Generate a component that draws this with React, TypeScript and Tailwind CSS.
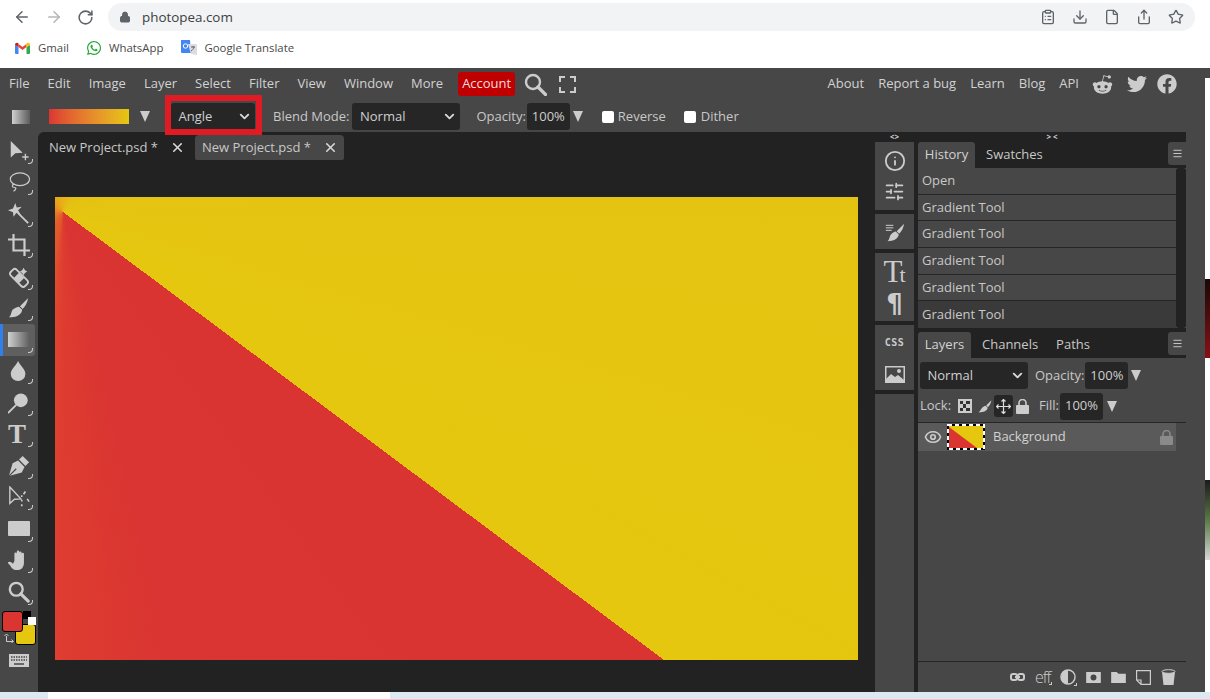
import { ArrowLeft, ArrowRight, RotateCw, Lock, ClipboardList, Download, File, Share, Star, ChevronDown, X, Menu, Eye, Info, SlidersHorizontal } from 'lucide-react';
import { FaRedditAlien, FaTwitter, FaFacebook, FaWhatsapp } from 'react-icons/fa';

const menuLeft = ['File', 'Edit', 'Image', 'Layer', 'Select', 'Filter', 'View', 'Window', 'More'];
const menuRight = ['About', 'Report a bug', 'Learn', 'Blog', 'API'];
const historyRows = ['Open', 'Gradient Tool', 'Gradient Tool', 'Gradient Tool', 'Gradient Tool', 'Gradient Tool'];

function Svg({ children, size = 22 }: { children: React.ReactNode; size?: number }) {
  return (
    <svg width={size} height={size} viewBox="0 0 24 24" fill="#cccccc">
      {children}
    </svg>
  );
}

const tools: React.ReactNode[] = [
  <Svg key="move"><path d="M3 1v18l5-4.500 8-.5z" /><path d="M19 15v7M15.500 18.500h7" stroke="#ccc" strokeWidth="1.500" /></Svg>,
  <Svg key="lasso"><ellipse cx="13" cy="9" rx="10.500" ry="7" fill="none" stroke="#ccc" strokeWidth="1.300" /><path d="M7 14c-3 1-3 4 0 4s1 3-1 4" fill="none" stroke="#ccc" strokeWidth="1.300" /></Svg>,
  <Svg key="wand"><path d="M8 0l1.500 5L15 4l-4 4 3 5-5-2-3 4-.5-5L0 8l5.500-2z" /><path d="M11 11l11 11" stroke="#ccc" strokeWidth="2" /></Svg>,
  <Svg key="crop"><path d="M6 0v18h18M0 6h18v18" fill="none" stroke="#ccc" strokeWidth="2.400" /></Svg>,
  <Svg key="heal"><g transform="rotate(45 12 13)"><rect x="1" y="8.500" width="22" height="9" rx="3" fill="none" stroke="#ccc" strokeWidth="2" /><rect x="8" y="9" width="8" height="8" fill="#ccc" /></g><path d="M17 2l1.500 2.500L21 6l-2.500 1.500L17 10l-1.500-2.500L13 6l2.500-1.500z" /></Svg>,
  <Svg key="brush"><path d="M22 1l-9 9 3 3c3-3 5-7 6-12z" /><path d="M12 10.500l3.500 3.500C15 19 9 23 1 22c3-2 2-7 5-9 2-1.500 4-2 6-2.500z" /></Svg>,
  <svg key="gradient" width="22" height="18" viewBox="0 0 22 18"><defs><linearGradient id="toolgrad"><stop offset="0" stopColor="#d0d0d0" /><stop offset="1" stopColor="#5c5c5c" /></linearGradient></defs><rect width="22" height="15" y="1" fill="url(#toolgrad)" /></svg>,
  <Svg key="drop"><path d="M11 1c3 6 8 9 8 14a8 8 0 0 1-16 0c0-5 5-8 8-14z" /></Svg>,
  <Svg key="dodge"><circle cx="14" cy="9" r="7.500" /><path d="M9 14L0 23" stroke="#ccc" strokeWidth="2" /></Svg>,
  <span key="type" className="font-['Liberation_Serif',serif] text-[27px] leading-none font-bold text-[#cccccc]">T</span>,
  <Svg key="pen"><path d="M16 1l7 7-4 4-7-7z" /><path d="M11 6l7 7-3 6L1 23l4-14z" /><path d="M1 23l8-8" stroke="#474747" strokeWidth="1.200" /></Svg>,
  <Svg key="pathsel"><path d="M2 1v18l5-4.500 7-.5z" fill="none" stroke="#ccc" strokeWidth="1.500" /><path d="M15 10v2M15 15v2M15 20v2M19 6l-2 3M21 14l2 3" stroke="#ccc" strokeWidth="1.800" /></Svg>,
  <svg key="rect" width="22" height="15" viewBox="0 0 22 15"><rect width="22" height="15" rx="1" fill="#cccccc" /></svg>,
  <Svg key="hand"><path d="M7 13V5a1.300 1.300 0 0 1 2.600 0V3a1.300 1.300 0 0 1 2.600 0v1a1.300 1.300 0 0 1 2.600 0v1.500a1.300 1.300 0 0 1 2.600 0V15c0 5-3 8-7 8-4 0-6-1-8-5l-3-3c2-2 4-1 6 1z" /></Svg>,
  <Svg key="zoom"><circle cx="9" cy="9" r="7" fill="none" stroke="#ccc" strokeWidth="2.600" /><path d="M14 14l8 8" stroke="#ccc" strokeWidth="3.400" strokeLinecap="round" /></Svg>,
];

function Triangle() {
  return <span className="block w-0 h-0 border-x-[5px] border-x-transparent border-t-[11px] border-t-[#cccccc]" />;
}

function Tick() {
  return <span className="absolute right-[2px] bottom-[3px] w-[5px] h-[5px] border-r border-b border-[#cccccc] rounded-br-[4px]" />;
}

function ToolCell({ children, active }: { children: React.ReactNode; active?: boolean }) {
  return (
    <div className={`relative h-[31.5px] w-[35px] flex items-center pl-[8px] rounded-r-[3px] ${active ? 'bg-[#5f5f5f] border-l-[3px] border-l-[#2f80ed] !pl-[5px]' : ''}`}>
      {children}
      <Tick />
    </div>
  );
}

function DarkSelect({ label, className }: { label: string; className: string }) {
  return (
    <div className={`h-[27px] rounded-[3px] bg-[#262626] flex items-center justify-between pl-[7.500px] pr-[3px] text-[#cfcfcf] ${className}`}>
      <span>{label}</span>
      <ChevronDown size={15} strokeWidth={3} color="#d8d8d8" />
    </div>
  );
}

function PercentBox({ className }: { className: string }) {
  return (
    <span className={`w-[43px] h-[27px] rounded-[3px] bg-[#262626] flex items-center justify-center text-[#cfcfcf] ${className}`}>100%</span>
  );
}

function PanelMenuButton() {
  return (
    <div className="ml-auto w-[18px] h-[23px] rounded-l-[3px] bg-[#474747] flex items-center justify-center">
      <Menu size={11} color="#d0d0d0" />
    </div>
  );
}

function IconGroup({ children, className }: { children: React.ReactNode; className: string }) {
  return <div className={`w-[39px] bg-[#474747] flex flex-col items-center shrink-0 ${className}`}>{children}</div>;
}

export default function App() {
  return (
    <div className="relative w-[1210px] h-[699px] overflow-hidden bg-white flex flex-col font-['Open_Sans',sans-serif]">
      {/* browser chrome */}
      <div className="h-[34px] flex items-center pl-[13px] pr-[15px] shrink-0">
        <ArrowLeft size={18} color="#5f6368" strokeWidth={2} />
        <ArrowRight size={18} color="#b4b6b9" strokeWidth={2} className="ml-[14px]" />
        <RotateCw size={17} color="#5f6368" strokeWidth={2.200} className="ml-[14px]" />
        <div className="ml-[14px] h-[28px] flex-1 rounded-full bg-[#f1f3f4] flex items-center pl-[11px] pr-[11px]">
          <Lock size={12} color="#5f6368" fill="#5f6368" />
          <span className="ml-[11px] text-[13.400px] text-[#3c4043]">photopea.com</span>
          <div className="ml-auto flex items-center gap-[16px] text-[#5f6368]">
            <ClipboardList size={16} />
            <Download size={16} />
            <File size={16} />
            <Share size={16} />
            <Star size={16} />
          </div>
        </div>
      </div>
      <div className="h-[34px] pb-[6px] flex items-center pl-[15px] text-[11.400px] text-[#4a4a4a] shrink-0">
        <svg width="15" height="12" viewBox="0 0 15 12" className="mr-[8px]">
          <path d="M0 3v8a1 1 0 0 0 1 1h2.500V5z" fill="#4285f4" />
          <path d="M15 3v8a1 1 0 0 1-1 1h-2.500V5z" fill="#34a853" />
          <path d="M3.500 5v-3L7.500 5l4-3v3l-4 3z" fill="#ea4335" />
          <path d="M0 3c0-2 2-3 3.500-1.500V5z" fill="#c5221f" />
          <path d="M15 3c0-2-2-3-3.500-1.500V5z" fill="#fbbc04" />
        </svg>
        <span>Gmail</span>
        <FaWhatsapp size={16} color="#25a83b" className="ml-[17px] mr-[7px]" />
        <span>WhatsApp</span>
        <svg width="16" height="16" viewBox="0 0 16 16" className="ml-[18px] mr-[7px]">
          <path d="M0 0h9l1 13H1a1 1 0 0 1-1-1z" fill="#4285f4" />
          <path d="M7 4h8a1 1 0 0 1 1 1v10l-6-1z" fill="#dadce0" />
          <circle cx="4.500" cy="6" r="2.200" fill="none" stroke="#fff" strokeWidth="1" />
          <path d="M10 7h4M12 6v1M13 7c-.5 2-1.500 3-3 4" fill="none" stroke="#5f6368" strokeWidth="1" />
        </svg>
        <span>Google Translate</span>
      </div>

      <div className="h-[624px] flex shrink-0">
        <div className="w-[1205px] bg-[#474747] flex flex-col">
          {/* menu bar */}
          <div className="h-[32px] flex items-center pl-[9px] pr-[28px] text-[13px] text-[#d2d2d2] shrink-0">
            <div className="flex gap-[18px]">
              {menuLeft.map((m) => (
                <span key={m}>{m}</span>
              ))}
            </div>
            <span className="ml-[15px] h-[24px] px-[4px] rounded-[3px] bg-[#c00000] text-[#f4dede] flex items-center">Account</span>
            <svg width="23" height="23" viewBox="0 0 23 23" className="ml-[9px]" fill="none" stroke="#cccccc">
              <circle cx="9" cy="9" r="7" strokeWidth="2.400" />
              <path d="M14 14l7.500 7.500" strokeWidth="3.200" strokeLinecap="round" />
            </svg>
            <svg width="17" height="17" viewBox="0 0 17 17" className="ml-[12px]" fill="none" stroke="#cccccc" strokeWidth="2">
              <path d="M1 6V1h5M11 1h5v5M16 11v5h-5M6 16H1v-5" />
            </svg>
            <div className="ml-auto flex items-center gap-[14px]">
              {menuRight.map((m) => (
                <span key={m}>{m}</span>
              ))}
              <FaRedditAlien size={21} color="#cccccc" className="-ml-[1px]" />
              <FaTwitter size={20} color="#cccccc" />
              <FaFacebook size={20} color="#cccccc" className="-ml-[4px]" />
            </div>
          </div>

          {/* options bar */}
          <div className="h-[32px] pt-[1px] flex items-center pl-[12px] text-[13px] text-[#c8c8c8] shrink-0">
            <div className="w-[18px] h-[14px] bg-gradient-to-r from-[#d0d0d0] to-[#5c5c5c]" />
            <div className="ml-[19px] w-[80px] h-[15px] bg-gradient-to-r from-[#db3532] to-[#e5c70f]" />
            <div className="ml-[11px]"><Triangle /></div>
            <div className="relative ml-[21px]">
              <DarkSelect label="Angle" className="w-[84px]" />
              <div className="absolute -left-[6px] -right-[7px] -top-[8px] -bottom-[5px] border-[6px] border-[#e01b24]" />
            </div>
            <span className="ml-[18px]">Blend Mode:</span>
            <DarkSelect label="Normal" className="ml-[3px] w-[108px]" />
            <span className="ml-[16px]">Opacity:</span>
            <PercentBox className="ml-[1px]" />
            <div className="ml-[3px]"><Triangle /></div>
            <span className="ml-[19px] w-[12px] h-[12px] rounded-[2px] bg-white" />
            <span className="ml-[4px]">Reverse</span>
            <span className="ml-[18px] w-[12px] h-[12px] rounded-[2px] bg-white" />
            <span className="ml-[5px]">Dither</span>
          </div>

          {/* body */}
          <div className="flex-1 flex min-h-0">
            <div className="w-[38px] pt-[3px] flex flex-col shrink-0">
              {tools.map((t, i) => (
                <ToolCell key={i} active={i === 6}>{t}</ToolCell>
              ))}
              <div className="relative h-[42px]">
                <span className="absolute left-[15px] top-[16px] w-[21px] h-[21px] rounded-[3px] bg-[#e5c70f] border border-black" />
                <span className="absolute left-[2px] top-[3px] w-[21px] h-[21px] rounded-[3px] bg-[#db3532] border border-black" />
                <span className="absolute left-[23px] top-[3px] w-[8px] h-[8px] bg-black" />
                <span className="absolute left-[28px] top-[9px] w-[8px] h-[8px] bg-white" />
                <svg width="11" height="10" viewBox="0 0 11 10" fill="none" stroke="#cccccc" className="absolute left-[4px] top-[25px]">
                  <path d="M2.500 3v5.500H9M.5 3l2-2 2 2M7.500 6.500l2 2-2 1" />
                </svg>
              </div>
              <div className="mt-[4px] pl-[9px]">
                <svg width="20" height="13" viewBox="0 0 20 13">
                  <rect width="20" height="13" fill="#cccccc" />
                  <path d="M2 3h16M2 6h16" stroke="#474747" strokeWidth="1.500" strokeDasharray="1.500 1" />
                  <path d="M5 10h10" stroke="#474747" strokeWidth="1.500" />
                </svg>
              </div>
            </div>

            {/* workspace */}
            <div className="w-[1148px] bg-[#222222] rounded-tl-[6px] flex min-w-0">
              <div className="w-[837px] flex flex-col shrink-0">
                <div className="h-[25px] mt-[3px] flex items-stretch text-[13px] text-[#c8c8c8] shrink-0">
                  <div className="w-[157px] pl-[11px] flex items-center justify-between pr-[10px]">
                    <span>New Project.psd *</span>
                    <X size={15} strokeWidth={2.500} color="#d8d8d8" />
                  </div>
                  <div className="w-[149px] pl-[7px] pr-[6px] rounded-t-[4px] rounded-b-[2px] bg-[#474747] flex items-center justify-between">
                    <span>New Project.psd *</span>
                    <X size={15} strokeWidth={2.500} color="#d8d8d8" />
                  </div>
                </div>
                <div className="ml-[17px] mt-[37px] w-[803px] h-[463px] bg-[conic-gradient(from_126.7deg_at_8px_15px,#d93432_0%,#da3532_11%,#de3c30_14.800%,#e2552c_17.500%,#e77f24_40%,#e8961c_50%,#e8ae18_62%,#e5c014_75%,#e5c70f_100%)]" />
              </div>

              <div className="w-[39px] flex flex-col shrink-0">
                <div className="h-[10px] flex items-center justify-center text-[8px] leading-none font-bold text-[#cccccc]">&lt;&gt;</div>
                <IconGroup className="h-[68px] justify-around py-[3px]">
                  <Info size={22} color="#cccccc" />
                  <SlidersHorizontal size={21} color="#cccccc" />
                </IconGroup>
                <IconGroup className="h-[35px] justify-center mt-[4px]">
                  <Svg size={20}>
                    <path d="M23 2l-9 9 3 3c3-3 5-7 6-12z" />
                    <path d="M13 11.500l3.500 3.500C16 20 10 23 3 23c3-2 2-7 5-9 2-1.500 3-2 5-2.500z" />
                    <path d="M1 4h9M1 7h9M1 10h7" stroke="#ccc" strokeWidth="1.200" />
                  </Svg>
                </IconGroup>
                <IconGroup className="h-[68px] pt-[3px] mt-[4px] text-[#cccccc] font-['Liberation_Serif',serif]">
                  <span className="h-[32px] -ml-[3px] leading-[32px] text-[31px] tracking-[-3px]">T<span className="text-[22px]">t</span></span>
                  <span className="h-[32px] leading-[32px] text-[26px] font-bold font-['DejaVu_Sans',sans-serif]">¶</span>
                </IconGroup>
                <IconGroup className="h-[65px] justify-between pt-[13px] pb-[7px] mt-[4px] text-[#cccccc]">
                  <span className="text-[10px] leading-none font-bold tracking-[0.500px] font-['DejaVu_Sans_Mono',monospace]">CSS</span>
                  <svg width="20" height="17" viewBox="0 0 20 17">
                    <rect width="20" height="17" fill="#cccccc" />
                    <rect x="1.500" y="1.500" width="17" height="14" fill="#474747" />
                    <circle cx="14" cy="5" r="2" fill="#cccccc" />
                    <path d="M1 16v-3l5-5 4 3 3-2 6 5v2z" fill="#cccccc" />
                  </svg>
                </IconGroup>
                <IconGroup className="flex-1 mt-[4px]">{null}</IconGroup>
              </div>

              {/* panels */}
              <div className="ml-[4px] w-[268px] flex flex-col text-[13px] text-[#c8c8c8] shrink-0">
                <div className="h-[10px] flex items-center justify-center text-[8px] leading-none font-bold text-[#cccccc]">&gt; &lt;</div>
                <div className="h-[26px] flex shrink-0">
                  <div className="w-[57px] pb-[1px] rounded-t-[3px] bg-[#474747] flex items-center justify-center text-[#d2d2d2]">History</div>
                  <div className="ml-[11px] pb-[1px] flex items-center">Swatches</div>
                  <PanelMenuButton />
                </div>
                <div className="h-[160px] flex shrink-0">
                  <div className="w-[258px] flex flex-col">
                    {historyRows.map((row, i) => (
                      <div key={i} className={`h-[26.670px] pl-[4px] flex items-center border-b border-[#262626] ${i === 5 ? 'bg-[#3a3a3a] border-b-0' : 'bg-[#474747]'}`}>
                        {row}
                      </div>
                    ))}
                  </div>
                  <div className="w-[10px] bg-[#474747] flex">
                    <div className="w-[10px] h-full bg-[#222222] rounded-[3px]" />
                  </div>
                </div>
                <div className="h-[4px] shrink-0" />
                <div className="h-[26px] flex shrink-0">
                  <div className="w-[53px] pb-[1px] rounded-t-[3px] bg-[#474747] flex items-center justify-center text-[#d2d2d2]">Layers</div>
                  <div className="ml-[11px] pb-[1px] flex items-center">Channels</div>
                  <div className="ml-[18px] pb-[1px] flex items-center">Paths</div>
                  <PanelMenuButton />
                </div>
                <div className="flex-1 bg-[#474747] flex flex-col min-h-0">
                  <div className="h-[34px] pt-[4px] pl-[2px] flex items-start">
                    <DarkSelect label="Normal" className="w-[108px]" />
                    <span className="ml-[7px] h-[27px] flex items-center">Opacity:</span>
                    <PercentBox className="ml-[1px]" />
                    <div className="ml-[3px] h-[27px] flex items-center"><Triangle /></div>
                  </div>
                  <div className="h-[31px] pb-[2px] pl-[2px] flex items-center border-b border-[#262626]">
                    <span className="w-[31px]">Lock:</span>
                    <svg width="14" height="14" viewBox="0 0 14 14" className="ml-[7px]">
                      <rect width="14" height="14" fill="#cccccc" />
                      <path d="M2 2h3v3H2zM8 2h4v3H8zM5 5h3v4H5zM2 9h3v3H2zM8 9h4v3H8z" fill="#333" />
                    </svg>
                    <span className="ml-[6px]">
                      <Svg size={14}>
                        <path d="M23 2l-9 9 3 3c3-3 5-7 6-12z" />
                        <path d="M13 11.500l3.500 3.500C16 20 10 23 1 23c3-2 4-7 7-9 2-1.500 3-2 5-2.500z" />
                      </Svg>
                    </span>
                    <span className="ml-[2px] w-[19px] h-[22px] rounded-[3px] bg-[#262626] flex items-center justify-center">
                      <svg width="15" height="15" viewBox="0 0 15 15" fill="none" stroke="#dddddd" strokeWidth="1.200">
                        <path d="M7.500 0v15M0 7.500h15M5.500 2.500l2-2 2 2M5.500 12.500l2 2 2-2M2.500 5.500l-2 2 2 2M12.500 5.500l2 2-2 2" />
                      </svg>
                    </span>
                    <svg width="13" height="15" viewBox="0 0 13 15" className="ml-[3px]">
                      <rect y="6" width="13" height="9" rx="1" fill="#cccccc" />
                      <path d="M3 6V4a3.500 3.500 0 0 1 7 0v2" fill="none" stroke="#cccccc" strokeWidth="1.600" />
                    </svg>
                    <span className="ml-[10px] w-[19px]">Fill:</span>
                    <PercentBox className="ml-[2px]" />
                    <div className="ml-[4px]"><Triangle /></div>
                  </div>
                  <div className="h-[28px] w-[258px] bg-[#5a5a5a] flex items-center shrink-0">
                    <Eye size={18} color="#cccccc" strokeWidth={2.200} className="ml-[6px]" />
                    <svg width="38" height="26" viewBox="0 0 38 26" className="ml-[5px]">
                      <rect x="2" y="2" width="34" height="22" fill="#e5c70f" />
                      <path d="M2 3l28 21H2z" fill="#db3532" />
                      <rect x="1" y="1" width="36" height="24" fill="none" stroke="#000000" strokeWidth="2" />
                      <rect x="1" y="1" width="36" height="24" fill="none" stroke="#ffffff" strokeWidth="2" strokeDasharray="4 3" />
                    </svg>
                    <span className="ml-[8px] text-[#d2d2d2]">Background</span>
                    <svg width="13" height="15" viewBox="0 0 13 15" className="ml-auto mr-[3px]">
                      <rect y="6" width="13" height="9" rx="1" fill="#8a8a8a" />
                      <path d="M3 6V4a3.500 3.500 0 0 1 7 0v2" fill="none" stroke="#8a8a8a" strokeWidth="1.600" />
                    </svg>
                  </div>
                  <div className="flex-1" />
                  <div className="h-[31px] border-t border-[#262626] flex items-center justify-end gap-[10px] pr-[10px] shrink-0">
                    <svg width="15" height="8" viewBox="0 0 15 8" fill="none" stroke="#cccccc" strokeWidth="2">
                      <rect x="1" y="1" width="6" height="6" rx="2" />
                      <rect x="8" y="1" width="6" height="6" rx="2" />
                      <path d="M5 4h5" />
                    </svg>
                    <span className="relative w-[15px] text-[16px] leading-none font-light text-[#cccccc] tracking-[-1px]">
                      eff
                      <span className="absolute -right-[2px] bottom-0 w-[3px] h-[3px] border-r border-b border-[#cccccc]" />
                    </span>
                    <span className="relative">
                      <svg width="16" height="16" viewBox="0 0 17 17" className="block">
                        <circle cx="8.500" cy="8.500" r="7.500" fill="none" stroke="#cccccc" strokeWidth="1.500" />
                        <path d="M8.500 1a7.500 7.500 0 0 0 0 15z" fill="#cccccc" />
                      </svg>
                      <span className="absolute -right-[1px] -bottom-[1px] w-[3px] h-[3px] border-r border-b border-[#cccccc]" />
                    </span>
                    <svg width="15" height="11" viewBox="0 0 16 12">
                      <rect width="16" height="12" fill="#cccccc" />
                      <circle cx="8" cy="6" r="3.200" fill="#474747" />
                    </svg>
                    <svg width="15" height="11" viewBox="0 0 16 12"><path d="M0 0h6l2 2h8v10H0z" fill="#cccccc" /></svg>
                    <svg width="15" height="15" viewBox="0 0 15 15" fill="none" stroke="#cccccc" strokeWidth="1.200">
                      <path d="M.6.600h13.800v13.800H5L.6 10zM.6 10H5v4.400" />
                    </svg>
                    <svg width="15" height="16" viewBox="0 0 15 16">
                      <path d="M1 3h13l-1.500 13h-10z" fill="#cccccc" />
                      <ellipse cx="7.500" cy="2.500" rx="6.500" ry="1.800" fill="#474747" stroke="#cccccc" />
                    </svg>
                  </div>
                </div>
              </div>
            </div>
            <div className="w-[19px]" />
          </div>
        </div>
        {/* page showing behind the window */}
        <div className="w-[5px] flex flex-col">
          <div className="h-[10px] bg-[#474747]" />
          <div className="h-[201px]" />
          <div className="h-[79px] bg-gradient-to-b from-[#1c0606] to-[#8a0f16]" />
          <div className="h-[122px]" />
          <div className="h-[80px] bg-gradient-to-b from-[#1b1b1b] via-[#5b7a45] to-[#d8d8d8]" />
        </div>
      </div>
      <div className="flex-1 flex">
        <div className="w-[48px] bg-[#dce9f2]" />
        <div className="w-[342px]" />
        <div className="flex-1 bg-[#dce9f2]" />
      </div>
    </div>
  );
}
